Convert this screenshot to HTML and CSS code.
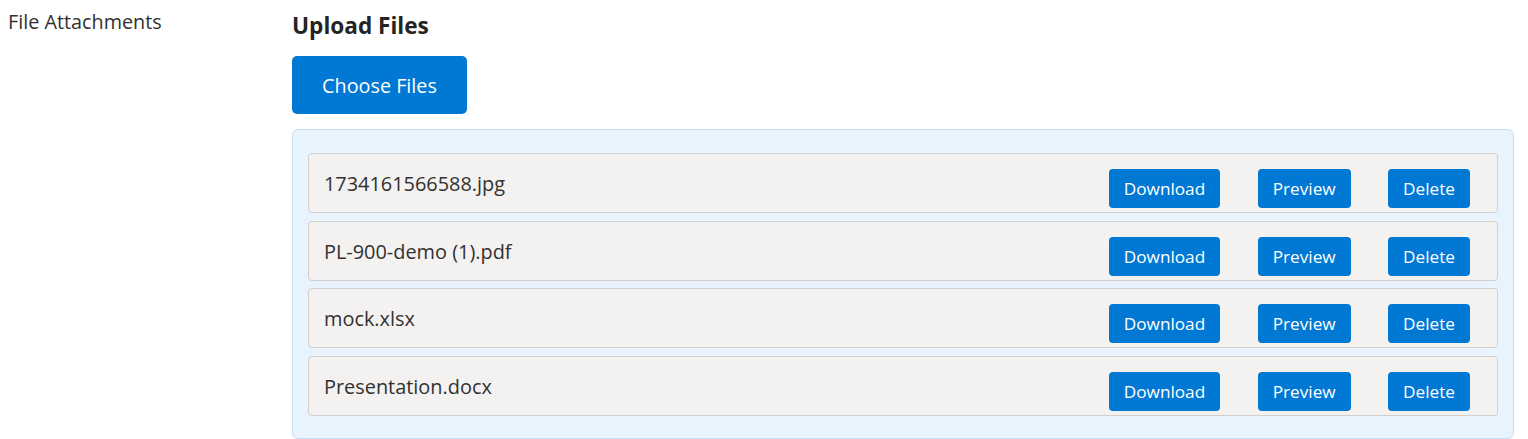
FILE: index.html
```html
<!DOCTYPE html>
<html lang="en">
<head>
<meta charset="utf-8">
<title>File Attachments</title>
<link rel="stylesheet" href="styles.css">
</head>
<body>
<div class="field">
  <div class="field-label">File Attachments</div>
  <div class="field-control">
    <h2 class="upload-title">Upload Files</h2>
    <button class="choose-btn" type="button">Choose Files</button>
    <div class="file-list">
      <div class="file-row">
        <span class="file-name">1734161566588.jpg</span>
        <div class="file-actions">
          <button class="act-btn" type="button">Download</button>
          <button class="act-btn" type="button">Preview</button>
          <button class="act-btn" type="button">Delete</button>
        </div>
      </div>
      <div class="file-row">
        <span class="file-name">PL-900-demo (1).pdf</span>
        <div class="file-actions">
          <button class="act-btn" type="button">Download</button>
          <button class="act-btn" type="button">Preview</button>
          <button class="act-btn" type="button">Delete</button>
        </div>
      </div>
      <div class="file-row">
        <span class="file-name">mock.xlsx</span>
        <div class="file-actions">
          <button class="act-btn" type="button">Download</button>
          <button class="act-btn" type="button">Preview</button>
          <button class="act-btn" type="button">Delete</button>
        </div>
      </div>
      <div class="file-row">
        <span class="file-name">Presentation.docx</span>
        <div class="file-actions">
          <button class="act-btn" type="button">Download</button>
          <button class="act-btn" type="button">Preview</button>
          <button class="act-btn" type="button">Delete</button>
        </div>
      </div>
    </div>
  </div>
</div>
</body>
</html>
```

FILE: styles.css
```css
* {
  box-sizing: border-box;
}

body {
  margin: 8px;
  font-family: "Segoe UI", "Open Sans", "Noto Sans", sans-serif;
  color: #323130;
  background: #ffffff;
}

.field {
  display: grid;
  grid-template-columns: 284px 1fr;
  margin-right: 6px;
}

.field-label {
  font-size: 19.8px;
  line-height: 27px;
  color: #323130;
}

.field-control {
  display: flex;
  flex-direction: column;
  align-items: flex-start;
}

.upload-title {
  margin: 2px 0 0;
  font-size: 22.6px;
  font-weight: 700;
  line-height: 31px;
  color: #252423;
}

.choose-btn {
  margin-top: 15px;
  height: 58px;
  width: 175px;
  border: none;
  border-radius: 5px;
  background: #0078d4;
  color: #ffffff;
  font-family: inherit;
  font-size: 19.8px;
  padding: 0;
}

.file-list {
  margin-top: 15px;
  align-self: stretch;
  display: flex;
  flex-direction: column;
  gap: 7.5px;
  padding: 23px 15px 22px;
  background: #e9f3fd;
  border: 1px solid #c5def5;
  border-radius: 6px;
}

.file-row {
  display: flex;
  align-items: flex-start;
  justify-content: space-between;
  height: 60px;
  padding: 15px 27px 0 15px;
  background: #f3f2f1;
  border: 1px solid #d2d0ce;
  border-radius: 4px;
}

.file-name {
  font-size: 19.9px;
  line-height: 30px;
  color: #323130;
}

.file-actions {
  display: flex;
  gap: 37.5px;
}

.act-btn {
  height: 39px;
  padding: 0 15px;
  border: none;
  border-radius: 4px;
  background: #0078d4;
  color: #ffffff;
  font-family: inherit;
  font-size: 17.2px;
}
```
